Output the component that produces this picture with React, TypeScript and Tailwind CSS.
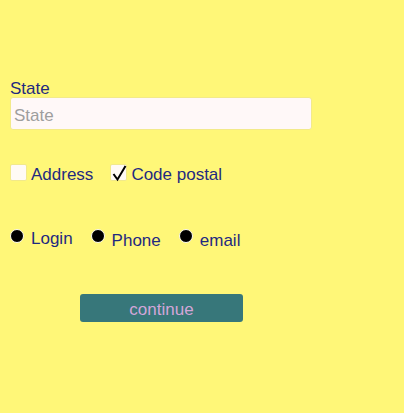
import React from 'react';

const font = { fontFamily: '"Liberation Sans", Arial, sans-serif' };

function Check({ checked, label }: { checked?: boolean; label: string }) {
  return (
    <label className="flex items-start gap-[4px]">
      <span className="relative w-[17px] h-[17px] bg-[#fffaf5] border border-[#f2e98a] rounded-[2px]">
        {checked && (
          <svg viewBox="0 0 17 17" className="absolute left-0 top-[-1px] w-[17px] h-[18px]">
            <path d="M2.5 9.5 L6.5 15 L14.5 1.5" fill="none" stroke="#000" strokeWidth="2" />
          </svg>
        )}
      </span>
      <span className="mt-[1px]">{label}</span>
    </label>
  );
}

function Radio({ label, className = '', textClass = '' }: { label: string; className?: string; textClass?: string }) {
  return (
    <label className={`flex items-start gap-[7px] ${className}`}>
      <span className="w-[14px] h-[14px] rounded-full bg-black border border-[#fffdf0]" />
      <span className={textClass}>{label}</span>
    </label>
  );
}

export default function App() {
  return (
    <div className="min-h-screen bg-[#fff778] pl-[10px] text-[17px] text-[#1f2a80]" style={font}>
      <div className="pt-[80px] leading-[17px]">State</div>
      <input
        placeholder="State"
        className="block w-[302px] h-[33px] bg-[#fff8f8] border border-[#f3ea8a] rounded-[3px] px-[3px] pt-[4px] text-[17px] placeholder:text-[#9e9e9e] outline-none"
        style={font}
      />
      <div className="flex items-start gap-[17px] mt-[34px] leading-[20px]">
        <Check label="Address" />
        <Check checked label="Code postal" />
      </div>
      <div className="flex items-start mt-[44px] leading-[20px]">
        <Radio label="Login" />
        <Radio label="Phone" className="ml-[18px]" textClass="mt-[2px]" />
        <Radio label="email" className="ml-[18px]" textClass="mt-[2px]" />
      </div>
      <button
        className="flex items-center justify-center ml-[70px] mt-[43px] w-[163px] h-[28px] bg-[#37777a] rounded-[3px] text-[17px] text-[#d3a6d8] leading-[20px] pt-[3px]"
        style={font}
      >
        continue
      </button>
    </div>
  );
}
